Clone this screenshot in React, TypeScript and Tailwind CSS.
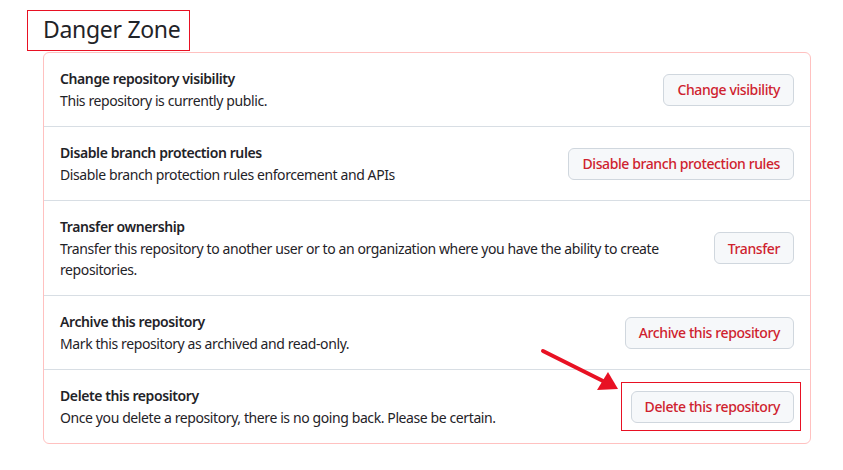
import React from "react";

const rows = [
  { title: "Change repository visibility", desc: "This repository is currently public.", btn: "Change visibility", h: "h-[73px]" },
  { title: "Disable branch protection rules", desc: "Disable branch protection rules enforcement and APIs", btn: "Disable branch protection rules", h: "h-[74px]" },
  { title: "Transfer ownership", desc: "Transfer this repository to another user or to an organization where you have the ability to create repositories.", btn: "Transfer", h: "h-[95px]" },
  { title: "Archive this repository", desc: "Mark this repository as archived and read-only.", btn: "Archive this repository", h: "h-[74px]" },
  { title: "Delete this repository", desc: "Once you delete a repository, there is no going back. Please be certain.", btn: "Delete this repository", h: "h-[74px]", highlight: true },
];

export default function App() {
  return (
    <div className="w-[843px] h-[470px] bg-white text-[#1f2328] relative" style={{ fontFamily: '"Segoe UI", "Noto Sans", sans-serif' }}>
      <div className="pt-[10px] pl-[27px]">
        <div className="w-[163px] h-[41px] border border-[#e81123] pl-[15px] pb-[2px] flex items-center">
          <h2 className="text-[23px] leading-none font-normal whitespace-nowrap tracking-[-0.3px]">Danger Zone</h2>
        </div>
      </div>
      <div className="ml-[43px] mt-[1px] w-[768px] border border-[#ffc1c0] rounded-[6px]">
        {rows.map((r, i) => (
          <div key={i} className={`${r.h} flex items-center justify-between px-4 ${i > 0 ? "border-t border-[#d8dee4]" : ""}`}>
            <div className="flex-1 pr-[40px] tracking-[-0.4px]">
              <div className="text-[14px] font-semibold leading-[21px]">{r.title}</div>
              <div className="text-[14px] leading-[21px] mt-[1px]">{r.desc}</div>
            </div>
            <div className="relative shrink-0">
              {r.highlight && (
                <div className="absolute -left-[10px] -top-[9px] -right-[7px] -bottom-[8px] border border-[#e81123]" />
              )}
              <button className="relative h-[32px] px-[13px] rounded-[6px] border border-[#d0d7de] bg-[#f6f8fa] text-[#cf222e] text-[14px] font-medium whitespace-nowrap tracking-[-0.4px]">
                {r.btn}
              </button>
            </div>
          </div>
        ))}
      </div>
      <svg className="absolute left-0 top-0 pointer-events-none" width="843" height="470">
        <line x1="543" y1="351" x2="605" y2="382" stroke="#e81123" strokeWidth="4" strokeLinecap="round" />
        <polygon points="618,389 597,390 608,372" fill="#e81123" />
      </svg>
    </div>
  );
}
